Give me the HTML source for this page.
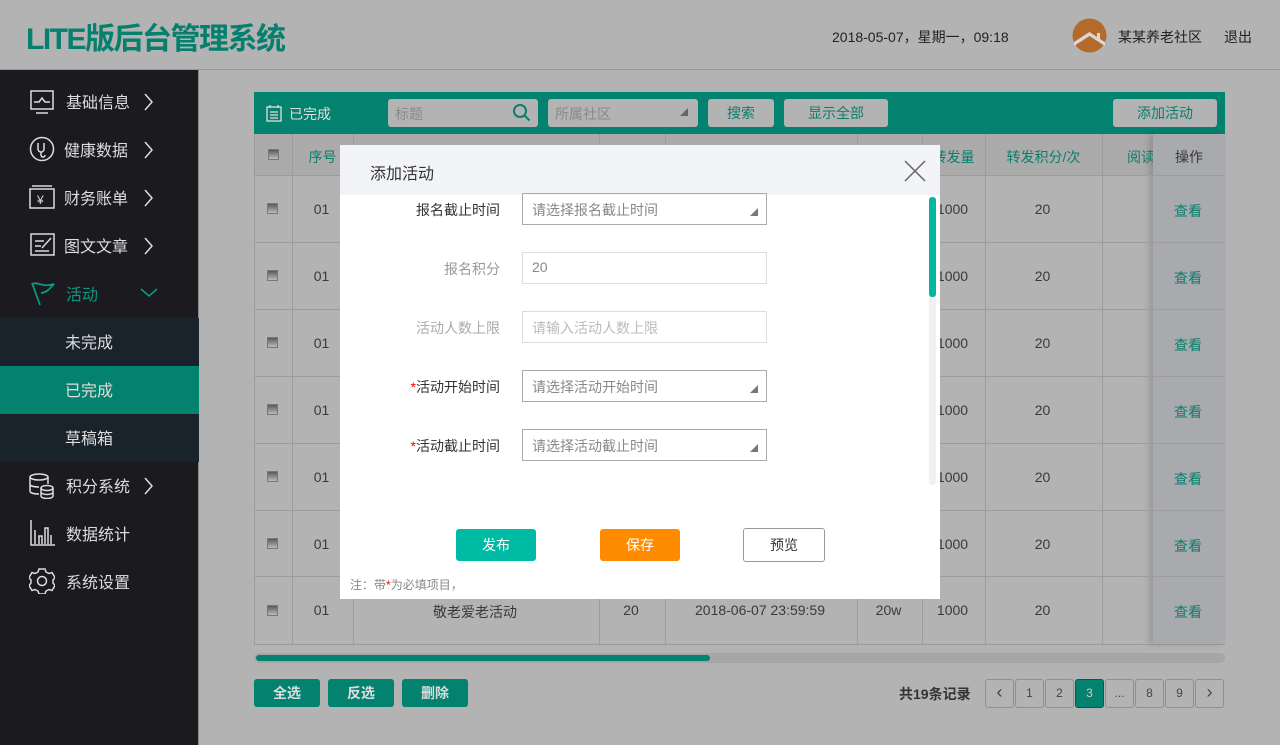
<!DOCTYPE html>
<html><head><meta charset="utf-8"><style>
*{margin:0;padding:0;box-sizing:border-box}
body{width:1280px;height:745px;background:#b3b3b3;font-family:"Liberation Sans","Noto Sans CJK SC",sans-serif;position:relative;overflow:hidden;color:#333}
.a{position:absolute}
.hdr{left:0;top:0;width:1280px;height:70px;border-bottom:1px solid #999}
.logo{left:26px;top:14px;font-size:30px;font-weight:bold;color:#05806e;letter-spacing:-1.5px}
.side{left:0;top:70px;width:199px;height:675px;background:#1b1a1f;border-right:1px solid #888}
.mi{position:absolute;left:0;width:199px;height:48px;color:#ddd;font-size:16px}
.mi span{position:absolute;left:66px;top:11px}
.mi svg{position:absolute}
.sub{background:#18232c}
.tb{left:254px;top:92px;width:971px;height:42px;background:#03826f}
.inp{background:#b3b3b3;border-radius:3px;color:#8a8a8a;font-size:14px}
.btn{background:#b3b3b3;border-radius:3px;color:#0a7e6c;font-size:14px;text-align:center;line-height:28px}
.grid{left:254px;top:134px;width:971px;height:511px;border:1px solid #9c9c9c;border-top:0}
.vl{position:absolute;top:0;width:1px;height:510px;background:#9c9c9c}
.hl{position:absolute;left:0;width:970px;height:1px;background:#9c9c9c}
.c{position:absolute;font-size:14px;color:#3a3a3a;text-align:center;white-space:nowrap}
.g{color:#0a7e6c}
.cb{position:absolute;left:13px;width:11px;height:11px;background:linear-gradient(#5a5a5a,#bbb);border:1px solid #777}
.modal{left:340px;top:145px;width:600px;height:454px;background:#fff}
.lbl{position:absolute;right:440px;font-size:14px;color:#333;text-align:right;white-space:nowrap}
.fi{position:absolute;left:182px;width:245px;height:32px;border:1px solid #aaa;font-size:14px;color:#888;padding:6px 0 0 9px}
.tri{position:absolute;right:8px;bottom:8px;width:0;height:0;border-left:8px solid transparent;border-bottom:8px solid #777}
.bb{position:absolute;top:679px;height:28px;width:66px;background:#048270;border-radius:3px;color:#ddd;font-size:14px;font-weight:bold;text-align:center;line-height:28px}
.pg{position:absolute;top:679px;width:29px;height:29px;border:1px solid #8f8f8f;border-radius:3px;font-size:12px;text-align:center;line-height:27px;color:#444}
</style></head><body>
<div class="a hdr"></div>
<div class="a logo">LITE版后台管理系统</div>
<div class="a" style="left:832px;top:27px;font-size:14px;color:#222">2018-05-07，星期一，09:18</div>
<svg class="a" style="left:1072px;top:18px" width="35" height="35" viewBox="0 0 35 35"><circle cx="17.5" cy="17.5" r="17" fill="#b36a2b"/><path d="M2 28 L17.5 18 L33 28 L33 24 L28 21 L28 15 L25 15 L25 19 L17.5 14 L2 24Z" fill="#d8d8d8"/></svg>
<div class="a" style="left:1118px;top:27px;font-size:14px;color:#222">某某养老社区</div>
<div class="a" style="left:1224px;top:27px;font-size:14px;color:#222">退出</div>

<div class="a side">
 <div class="mi" style="top:8px"><svg style="left:30px;top:12px" width="24" height="24" fill="none" stroke="#ddd" stroke-width="1.5"><rect x="1" y="1" width="22" height="18"/><path d="M4 12h5l3-4 3 4h5M6 23h12"/></svg><span>基础信息</span><svg style="left:144px;top:15px" width="10" height="18" fill="none" stroke="#ddd" stroke-width="1.5"><path d="M1 1l7 8-7 8"/></svg></div>
 <div class="mi" style="top:56px"><svg style="left:29px;top:10px" width="26" height="26" fill="none" stroke="#ddd" stroke-width="1.5"><circle cx="13" cy="13" r="11.5"/><path d="M9 7v6a3 3 0 0 0 6 0V7M12 16v3a2 2 0 0 0 4 0"/></svg><span style="left:64px">健康数据</span><svg style="left:144px;top:15px" width="10" height="18" fill="none" stroke="#ddd" stroke-width="1.5"><path d="M1 1l7 8-7 8"/></svg></div>
 <div class="mi" style="top:104px"><svg style="left:29px;top:11px" width="26" height="24" fill="none" stroke="#ddd" stroke-width="1.5"><path d="M3 1h20"/><rect x="1" y="4" width="24" height="19"/><text x="8" y="19" fill="#ddd" stroke="none" font-size="12">¥</text></svg><span style="left:64px">财务账单</span><svg style="left:144px;top:15px" width="10" height="18" fill="none" stroke="#ddd" stroke-width="1.5"><path d="M1 1l7 8-7 8"/></svg></div>
 <div class="mi" style="top:152px"><svg style="left:30px;top:11px" width="26" height="24" fill="none" stroke="#ddd" stroke-width="1.5"><rect x="1" y="1" width="23" height="21"/><path d="M5 8h9M5 13h6M5 18h14M12 15l9-10"/></svg><span style="left:64px">图文文章</span><svg style="left:144px;top:15px" width="10" height="18" fill="none" stroke="#ddd" stroke-width="1.5"><path d="M1 1l7 8-7 8"/></svg></div>
 <div class="mi" style="top:200px;color:#0a9a84"><svg style="left:30px;top:11px" width="26" height="26" fill="none" stroke="#0a9a84" stroke-width="1.8"><path d="M2 2l8 22M2 3c6-3 10 4 22 0c-4 4-6 8-13 9"/></svg><span>活动</span><svg style="left:140px;top:18px" width="18" height="10" fill="none" stroke="#0a9a84" stroke-width="1.5"><path d="M1 1l8 7 8-7"/></svg></div>
 <div class="mi sub" style="top:248px"><span style="left:65px">未完成</span></div>
 <div class="mi" style="top:296px;background:#03826f"><span style="left:65px;color:#e8dada">已完成</span></div>
 <div class="mi sub" style="top:344px"><span style="left:65px">草稿箱</span></div>
 <div class="mi" style="top:392px"><svg style="left:29px;top:11px" width="26" height="26" fill="none" stroke="#ddd" stroke-width="1.5"><ellipse cx="10" cy="4" rx="9" ry="3"/><path d="M1 4v14c0 2 4 3 9 3M1 11c0 2 4 3 9 3M19 4v7"/><ellipse cx="18" cy="15" rx="6" ry="2.5"/><path d="M12 15v8c0 1.5 3 2.5 6 2.5s6-1 6-2.5v-8M12 19c0 1.5 3 2.5 6 2.5s6-1 6-2.5"/></svg><span>积分系统</span><svg style="left:144px;top:15px" width="10" height="18" fill="none" stroke="#ddd" stroke-width="1.5"><path d="M1 1l7 8-7 8"/></svg></div>
 <div class="mi" style="top:440px"><svg style="left:30px;top:10px" width="26" height="26" fill="none" stroke="#ddd" stroke-width="1.5"><path d="M1 0v25h24M5 24V10M9 24V16h3v8M15 24V8h3v16M21 24v-9"/></svg><span>数据统计</span></div>
 <div class="mi" style="top:488px"><svg style="left:29px;top:10px" width="26" height="26" fill="none" stroke="#ddd" stroke-width="1.5"><path d="M10 1h6l1 3 3 1.5 3-1 3 5-2 2.5v3l2 2.5-3 5-3-1-3 1.5-1 3h-6l-1-3-3-1.5-3 1-3-5 2-2.5v-3L0 9.5l3-5 3 1 3-1.5z"/><circle cx="13" cy="13" r="4.5"/></svg><span>系统设置</span></div>
</div>

<div class="a tb"></div>
<svg class="a" style="left:266px;top:104px" width="16" height="18" fill="none" stroke="#e8dada" stroke-width="1.3"><rect x="1" y="3" width="14" height="14"/><path d="M4 1v3M12 1v3M4 8h8M4 11h8M4 14h8"/></svg>
<div class="a" style="left:289px;top:104px;font-size:14px;color:#e8dada">已完成</div>
<div class="a inp" style="left:388px;top:99px;width:150px;height:28px;padding:5px 7px">标题</div>
<svg class="a" style="left:512px;top:103px" width="19" height="19" fill="none" stroke="#0a7e6c" stroke-width="2"><circle cx="8" cy="8" r="6"/><path d="M12.5 12.5l5 5"/></svg>
<div class="a inp" style="left:548px;top:99px;width:150px;height:28px;padding:5px 7px">所属社区</div>
<div class="a" style="left:680px;top:108px;border-left:8px solid transparent;border-bottom:8px solid #666"></div>
<div class="a btn" style="left:708px;top:99px;width:66px">搜索</div>
<div class="a btn" style="left:784px;top:99px;width:104px">显示全部</div>
<div class="a btn" style="left:1113px;top:99px;width:104px">添加活动</div>

<div class="a grid">
 <div class="a" style="left:0;top:0;width:970px;height:41px;background:#ababab"></div>
 <div class="a" style="left:898px;top:0;width:72px;height:510px;background:#a9aaae;box-shadow:-4px 0 6px rgba(0,0,0,.15)"></div>
 <div class="vl" style="left:37px"></div><div class="vl" style="left:98px"></div><div class="vl" style="left:344px"></div><div class="vl" style="left:410px"></div><div class="vl" style="left:602px"></div><div class="vl" style="left:667px"></div><div class="vl" style="left:730px"></div><div class="vl" style="left:847px"></div>
 <div class="hl" style="top:41px"></div><div class="hl" style="top:108px"></div><div class="hl" style="top:175px"></div><div class="hl" style="top:242px"></div><div class="hl" style="top:309px"></div><div class="hl" style="top:376px"></div><div class="hl" style="top:442px"></div>
 <div class="cb" style="top:15px"></div>
 <div class="c g" style="left:37px;top:13px;width:61px">序号</div>
 <div class="c g" style="left:667px;top:13px;width:63px">转发量</div>
 <div class="c g" style="left:730px;top:13px;width:117px">转发积分/次</div>
 <div class="c g" style="left:872px;top:13px;text-align:left">阅读</div>
 <div class="c" style="left:898px;top:13px;width:72px;background:#a9aaae">操作</div>
</div>
<div class="a" style="left:254px;top:134px;width:971px;height:511px">
 <div class="cb" style="top:69px"></div><div class="c" style="left:37px;top:67px;width:61px">01</div><div class="c" style="left:667px;top:67px;width:63px">1000</div><div class="c" style="left:730px;top:67px;width:117px">20</div><div class="c g" style="left:898px;top:67px;width:72px">查看</div>
 <div class="cb" style="top:136px"></div><div class="c" style="left:37px;top:134px;width:61px">01</div><div class="c" style="left:667px;top:134px;width:63px">1000</div><div class="c" style="left:730px;top:134px;width:117px">20</div><div class="c g" style="left:898px;top:134px;width:72px">查看</div>
 <div class="cb" style="top:203px"></div><div class="c" style="left:37px;top:201px;width:61px">01</div><div class="c" style="left:667px;top:201px;width:63px">1000</div><div class="c" style="left:730px;top:201px;width:117px">20</div><div class="c g" style="left:898px;top:201px;width:72px">查看</div>
 <div class="cb" style="top:270px"></div><div class="c" style="left:37px;top:268px;width:61px">01</div><div class="c" style="left:667px;top:268px;width:63px">1000</div><div class="c" style="left:730px;top:268px;width:117px">20</div><div class="c g" style="left:898px;top:268px;width:72px">查看</div>
 <div class="cb" style="top:337px"></div><div class="c" style="left:37px;top:335px;width:61px">01</div><div class="c" style="left:667px;top:335px;width:63px">1000</div><div class="c" style="left:730px;top:335px;width:117px">20</div><div class="c g" style="left:898px;top:335px;width:72px">查看</div>
 <div class="cb" style="top:404px"></div><div class="c" style="left:37px;top:402px;width:61px">01</div><div class="c" style="left:667px;top:402px;width:63px">1000</div><div class="c" style="left:730px;top:402px;width:117px">20</div><div class="c g" style="left:898px;top:402px;width:72px">查看</div>
 <div class="cb" style="top:471px"></div><div class="c" style="left:37px;top:468px;width:61px">01</div><div class="c" style="left:98px;top:468px;width:246px">敬老爱老活动</div><div class="c" style="left:344px;top:468px;width:66px">20</div><div class="c" style="left:410px;top:468px;width:192px">2018-06-07 23:59:59</div><div class="c" style="left:602px;top:468px;width:65px">20w</div><div class="c" style="left:667px;top:468px;width:63px">1000</div><div class="c" style="left:730px;top:468px;width:117px">20</div><div class="c g" style="left:898px;top:468px;width:72px">查看</div>
</div>

<div class="a" style="left:254px;top:653px;width:971px;height:10px;background:#a6a6a6;border-radius:5px"></div>
<div class="a" style="left:256px;top:655px;width:454px;height:6px;background:#048270;border-radius:3px"></div>

<div class="bb" style="left:254px">全选</div><div class="bb" style="left:328px">反选</div><div class="bb" style="left:402px">删除</div>
<div class="a" style="left:899px;top:684px;font-size:14px;font-weight:bold;color:#333">共19条记录</div>
<div class="pg" style="left:985px;font-size:18px;line-height:25px">&lsaquo;</div><div class="pg" style="left:1015px">1</div><div class="pg" style="left:1045px">2</div><div class="pg" style="left:1075px;background:#048270;color:#ccc;border-color:#035a4d">3</div><div class="pg" style="left:1105px">...</div><div class="pg" style="left:1135px">8</div><div class="pg" style="left:1165px">9</div><div class="pg" style="left:1195px;font-size:18px;line-height:25px">&rsaquo;</div>

<div class="a modal">
 <div class="a" style="left:0;top:0;width:600px;height:50px;background:#f3f4f8"></div>
 <div class="a" style="left:30px;top:15px;font-size:16px;color:#333">添加活动</div>
 <svg class="a" style="left:564px;top:15px" width="22" height="22" stroke="#666" stroke-width="1.5"><path d="M1 1l20 20M21 1L1 21"/></svg>
 <div class="a" style="left:589px;top:52px;width:7px;height:288px;background:#f0f0f0;border-radius:3px"></div>
 <div class="a" style="left:589px;top:52px;width:7px;height:100px;background:#00b8a0;border-radius:3px"></div>
 <div class="lbl" style="top:55px">报名截止时间</div>
 <div class="fi" style="top:48px">请选择报名截止时间<div class="tri"></div></div>
 <div class="lbl" style="top:114px;color:#999">报名积分</div>
 <div class="fi" style="top:107px;border-color:#ddd">20</div>
 <div class="lbl" style="top:173px;color:#aaa">活动人数上限</div>
 <div class="fi" style="top:166px;border-color:#ddd;color:#bbb">请输入活动人数上限</div>
 <div class="lbl" style="top:232px"><span style="color:red">*</span>活动开始时间</div>
 <div class="fi" style="top:225px">请选择活动开始时间<div class="tri"></div></div>
 <div class="lbl" style="top:291px"><span style="color:red">*</span>活动截止时间</div>
 <div class="fi" style="top:284px">请选择活动截止时间<div class="tri"></div></div>
 <div class="a" style="left:116px;top:384px;width:80px;height:32px;background:#00bba3;border-radius:3px;color:#fff;font-size:14px;text-align:center;line-height:32px">发布</div>
 <div class="a" style="left:260px;top:384px;width:80px;height:32px;background:#ff8c00;border-radius:3px;color:#fff;font-size:14px;text-align:center;line-height:32px">保存</div>
 <div class="a" style="left:403px;top:383px;width:82px;height:34px;border:1px solid #999;border-radius:3px;color:#333;font-size:14px;text-align:center;line-height:32px">预览</div>
 <div class="a" style="left:10px;top:431px;font-size:12px;color:#888">注：带<span style="color:red">*</span>为必填项目，</div>
</div>
</body></html>
